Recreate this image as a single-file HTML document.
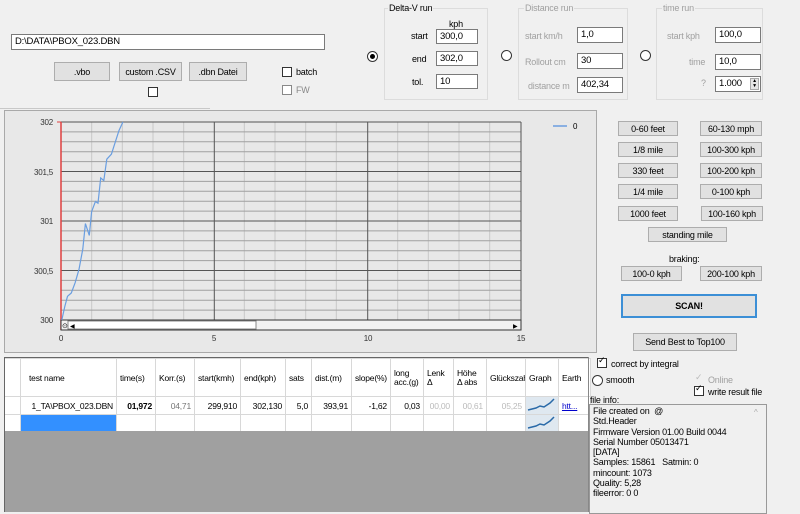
<!DOCTYPE html>
<html><head><meta charset="utf-8"><style>
*{box-sizing:border-box}
body{margin:0;width:800px;height:512px;background:#f0f0f0;font-family:"Liberation Sans",sans-serif;font-size:9px;color:#000;position:relative;overflow:hidden;letter-spacing:-0.2px}
.a{position:absolute}
.in{position:absolute;background:#fff;border:1px solid #7a7a7a;padding:1px 3px;font-size:9.5px;line-height:12px}
.btn{position:absolute;background:#e1e1e1;border:1px solid #adadad;text-align:center;font-size:9px;display:flex;align-items:center;justify-content:center}
.cb{position:absolute;width:10px;height:10px;border:1px solid #333;background:#fff}
.rd{position:absolute;width:11px;height:11px;border:1px solid #333;border-radius:50%;background:#fff}
.grp{position:absolute;border:1px solid #dcdcdc}
.gr{color:#a0a0a0}
table{border-collapse:collapse;position:absolute;left:4px;top:358px;background:#fff;font-size:8.5px}
td{border:1px solid #d8d8d8;padding:0 3px;white-space:nowrap;overflow:hidden}
</style></head><body>
<div class="in" style="left:11px;top:34px;width:314px;height:16px">D:\DATA\PBOX_023.DBN</div>
<div class="btn" style="left:54px;top:62px;width:56px;height:19px">.vbo</div>
<div class="btn" style="left:119px;top:62px;width:63px;height:19px">custom .CSV</div>
<div class="btn" style="left:189px;top:62px;width:58px;height:19px">.dbn Datei</div>
<div class="cb" style="left:148px;top:87px"></div>
<div class="cb" style="left:282px;top:67px"></div><div class="a" style="left:296px;top:67px">batch</div>
<div class="cb" style="left:282px;top:85px;border-color:#888"></div><div class="a gr" style="left:296px;top:85px;color:#888">FW</div>

<div class="rd" style="left:367px;top:51px"></div><div class="a" style="left:370px;top:54px;width:5px;height:5px;border-radius:50%;background:#000"></div>
<div class="grp" style="left:384px;top:8px;width:104px;height:92px"></div>
<div class="a" style="left:388px;top:3px;background:#f0f0f0;padding:0 1px">Delta-V run</div>
<div class="a" style="left:449px;top:19px">kph</div>
<div class="a" style="left:411px;top:31px">start</div><div class="in" style="left:436px;top:29px;width:42px;height:15px">300,0</div>
<div class="a" style="left:412px;top:54px">end</div><div class="in" style="left:436px;top:51px;width:42px;height:15px">302,0</div>
<div class="a" style="left:412px;top:77px">tol.</div><div class="in" style="left:436px;top:74px;width:42px;height:15px">10</div>

<div class="rd" style="left:501px;top:50px"></div>
<div class="grp" style="left:518px;top:8px;width:110px;height:92px"></div>
<div class="a gr" style="left:524px;top:3px;background:#f0f0f0;padding:0 1px">Distance run</div>
<div class="a gr" style="left:525px;top:31px">start km/h</div><div class="in" style="left:577px;top:27px;width:46px;height:16px">1,0</div>
<div class="a gr" style="left:525px;top:57px">Rollout cm</div><div class="in" style="left:577px;top:53px;width:46px;height:16px">30</div>
<div class="a gr" style="left:528px;top:81px">distance m</div><div class="in" style="left:577px;top:77px;width:46px;height:16px">402,34</div>

<div class="rd" style="left:640px;top:50px"></div>
<div class="grp" style="left:656px;top:8px;width:107px;height:92px"></div>
<div class="a gr" style="left:662px;top:3px;background:#f0f0f0;padding:0 1px">time run</div>
<div class="a gr" style="left:667px;top:31px">start kph</div><div class="in" style="left:715px;top:27px;width:46px;height:16px">100,0</div>
<div class="a gr" style="left:689px;top:57px">time</div><div class="in" style="left:715px;top:54px;width:46px;height:16px">10,0</div>
<div class="a gr" style="left:701px;top:78px">?</div><div class="in" style="left:715px;top:76px;width:46px;height:16px">1.000</div>
<div class="a" style="left:750px;top:78px;width:9px;height:12px;background:#e6e6e6;border:1px solid #aaa;font-size:5px;line-height:5px;text-align:center">▲<br>▼</div>

<div class="a" style="left:0;top:108px;width:210px;height:1px;background:#c8c8c8"></div>
<div class="a" style="left:4px;top:110px;width:593px;height:243px;border:1px solid #a9a9a9;background:#e8e8e8"></div>
<svg class="a" style="left:0;top:0" width="600" height="360" font-size="8" font-family="Liberation Sans">
<g stroke="#c8c8c8" stroke-width="1">
<line x1="91.7" y1="122" x2="91.7" y2="320"/><line x1="122.3" y1="122" x2="122.3" y2="320"/><line x1="153" y1="122" x2="153" y2="320"/><line x1="183.7" y1="122" x2="183.7" y2="320"/>
<line x1="244.3" y1="122" x2="244.3" y2="320"/><line x1="275" y1="122" x2="275" y2="320"/><line x1="305.7" y1="122" x2="305.7" y2="320"/><line x1="336.3" y1="122" x2="336.3" y2="320"/>
<line x1="397.7" y1="122" x2="397.7" y2="320"/><line x1="428.3" y1="122" x2="428.3" y2="320"/><line x1="459" y1="122" x2="459" y2="320"/><line x1="489.7" y1="122" x2="489.7" y2="320"/>
</g>
<g stroke="#a0a0a0" stroke-width="1">
<line x1="61" y1="131.9" x2="521" y2="131.9"/><line x1="61" y1="141.8" x2="521" y2="141.8"/><line x1="61" y1="151.7" x2="521" y2="151.7"/><line x1="61" y1="161.6" x2="521" y2="161.6"/>
<line x1="61" y1="181.4" x2="521" y2="181.4"/><line x1="61" y1="191.3" x2="521" y2="191.3"/><line x1="61" y1="201.2" x2="521" y2="201.2"/><line x1="61" y1="211.1" x2="521" y2="211.1"/>
<line x1="61" y1="230.9" x2="521" y2="230.9"/><line x1="61" y1="240.8" x2="521" y2="240.8"/><line x1="61" y1="250.7" x2="521" y2="250.7"/><line x1="61" y1="260.6" x2="521" y2="260.6"/>
<line x1="61" y1="280.4" x2="521" y2="280.4"/><line x1="61" y1="290.3" x2="521" y2="290.3"/><line x1="61" y1="300.2" x2="521" y2="300.2"/><line x1="61" y1="310.1" x2="521" y2="310.1"/>
</g>
<g stroke="#555" stroke-width="1">
<line x1="61" y1="122" x2="521" y2="122"/><line x1="61" y1="171.5" x2="521" y2="171.5"/><line x1="61" y1="221" x2="521" y2="221"/><line x1="61" y1="270.5" x2="521" y2="270.5"/>
<line x1="214.3" y1="122" x2="214.3" y2="320"/><line x1="367.7" y1="122" x2="367.7" y2="320"/><line x1="521" y1="122" x2="521" y2="330"/>
</g>
<line x1="61" y1="122" x2="61" y2="330" stroke="#e04040" stroke-width="1.5"/>
<g stroke="#e04040"><line x1="57" y1="122" x2="61" y2="122"/></g>
<rect x="61" y="320" width="460" height="10" fill="#f2f2f2" stroke="#333"/>
<rect x="68" y="321" width="188" height="8" fill="#fff" stroke="#888"/>
<text x="62" y="328" font-size="7">⊙</text><text x="70" y="328" font-size="6">◀</text><text x="513" y="328" font-size="6">▶</text>
<polyline fill="none" stroke="#6a9ee0" stroke-width="1.2" points="61.8,320 64.8,306.5 67.5,296.3 71.3,293 75.1,282.8 79,269.3 82.8,249 85.4,223.6 89.3,235.4 91.6,211.7 95.4,201.5 98,203.2 100.7,177.9 103.8,180.6 106.8,159.2 111.4,154.2 115.2,142.3 119,130.5 122.9,122"/>
<g text-anchor="end" fill="#333"><text x="53" y="125">302</text><text x="53" y="175">301,5</text><text x="53" y="224">301</text><text x="53" y="274">300,5</text><text x="53" y="323">300</text></g>
<g text-anchor="middle" fill="#333"><text x="61" y="341">0</text><text x="214" y="341">5</text><text x="368" y="341">10</text><text x="521" y="341">15</text></g>
<line x1="553" y1="126" x2="567" y2="126" stroke="#6a9ee0" stroke-width="1.5"/><text x="573" y="129">0</text>
</svg>

<div class="btn" style="left:618px;top:121px;width:60px;height:15px">0-60 feet</div>
<div class="btn" style="left:700px;top:121px;width:62px;height:15px">60-130 mph</div>
<div class="btn" style="left:618px;top:142px;width:60px;height:15px">1/8 mile</div>
<div class="btn" style="left:700px;top:142px;width:62px;height:15px">100-300 kph</div>
<div class="btn" style="left:618px;top:163px;width:60px;height:15px">330 feet</div>
<div class="btn" style="left:700px;top:163px;width:62px;height:15px">100-200 kph</div>
<div class="btn" style="left:618px;top:184px;width:60px;height:15px">1/4 mile</div>
<div class="btn" style="left:700px;top:184px;width:62px;height:15px">0-100 kph</div>
<div class="btn" style="left:618px;top:206px;width:60px;height:15px">1000 feet</div>
<div class="btn" style="left:701px;top:206px;width:62px;height:15px">100-160 kph</div>
<div class="btn" style="left:648px;top:227px;width:79px;height:15px">standing mile</div>
<div class="a" style="left:669px;top:254px">braking:</div>
<div class="btn" style="left:621px;top:266px;width:61px;height:15px">100-0 kph</div>
<div class="btn" style="left:700px;top:266px;width:62px;height:15px">200-100 kph</div>
<div class="btn" style="left:621px;top:294px;width:136px;height:24px;border:2px solid #3c8fd6;font-weight:bold">SCAN!</div>
<div class="btn" style="left:633px;top:333px;width:104px;height:18px">Send Best to Top100</div>

<table>
<tr style="height:38px"><td style="width:16px"></td><td style="width:96px;padding-left:8px">test name</td><td style="width:39px">time(s)</td><td style="width:39px">Korr.(s)</td><td style="width:46px">start(kmh)</td><td style="width:45px">end(kph)</td><td style="width:26px">sats</td><td style="width:40px">dist.(m)</td><td style="width:37px">slope(%)</td><td style="width:33px;line-height:9px">long<br>acc.(g)</td><td style="width:30px;line-height:9px">Lenk<br>Δ</td><td style="width:33px;line-height:9px">Höhe<br>Δ abs</td><td style="width:39px;max-width:39px">Glückszahl</td><td style="width:33px">Graph</td><td style="width:32px">Earth</td></tr>
<tr style="height:17px;text-align:right"><td></td><td>1_TA\PBOX_023.DBN</td><td style="font-weight:bold">01,972</td><td class="gr" style="color:#777">04,71</td><td>299,910</td><td>302,130</td><td>5,0</td><td>393,91</td><td>-1,62</td><td>0,03</td><td class="gr" style="color:#bbb">00,00</td><td style="color:#bbb">00,61</td><td style="color:#bbb">05,25</td><td style="padding:0;background:#dfe8f0"><svg width="32" height="15"><polyline points="2,13 10,11 14,9 18,10 24,6 28,2" fill="none" stroke="#2a6aa8" stroke-width="1.5"/></svg></td><td style="text-align:left"><span style="color:#00c;text-decoration:underline">htt...</span></td></tr>
<tr style="height:17px"><td></td><td style="background:#3390ff"></td><td></td><td></td><td></td><td></td><td></td><td></td><td></td><td></td><td></td><td></td><td></td><td style="padding:0;background:#dfe8f0"><svg width="32" height="15"><polyline points="2,13 10,11 14,9 18,10 24,6 28,2" fill="none" stroke="#2a6aa8" stroke-width="1.5"/></svg></td><td></td></tr>
</table>
<div class="a" style="left:4px;top:431px;width:584px;height:81px;background:#a0a0a0"></div>
<div class="a" style="left:4px;top:357px;width:1px;height:155px;background:#666"></div>
<div class="a" style="left:588px;top:357px;width:1px;height:155px;background:#888"></div>
<div class="a" style="left:4px;top:357px;width:584px;height:1px;background:#666"></div>

<div class="cb" style="left:597px;top:358px"></div><div class="a" style="left:598px;top:355px;font-size:9px">✓</div><div class="a" style="left:611px;top:359px">correct by integral</div>
<div class="rd" style="left:592px;top:375px"></div><div class="a" style="left:606px;top:375px">smooth</div>
<div class="a" style="left:695px;top:372px;color:#bbb">✓</div><div class="a gr" style="left:708px;top:375px">Online</div>
<div class="cb" style="left:694px;top:386px"></div><div class="a" style="left:695px;top:383px">✓</div><div class="a" style="left:708px;top:387px">write result file</div>
<div class="a" style="left:590px;top:395px">file info:</div>
<div class="a" style="left:589px;top:404px;width:178px;height:110px;border:1px solid #999;background:#f0f0f0;padding:1px 3px;line-height:10.3px;font-size:9px">File created on &nbsp;@<br>Std.Header<br>Firmware Version 01.00 Build 0044<br>Serial Number 05013471<br>[DATA]<br>Samples: 15861 &nbsp; Satmin: 0<br>mincount: 1073<br>Quality: 5,28<br>fileerror: 0 0</div>
<div class="a" style="left:754px;top:408px;color:#aaa;font-size:8px">^</div>
</body></html>
